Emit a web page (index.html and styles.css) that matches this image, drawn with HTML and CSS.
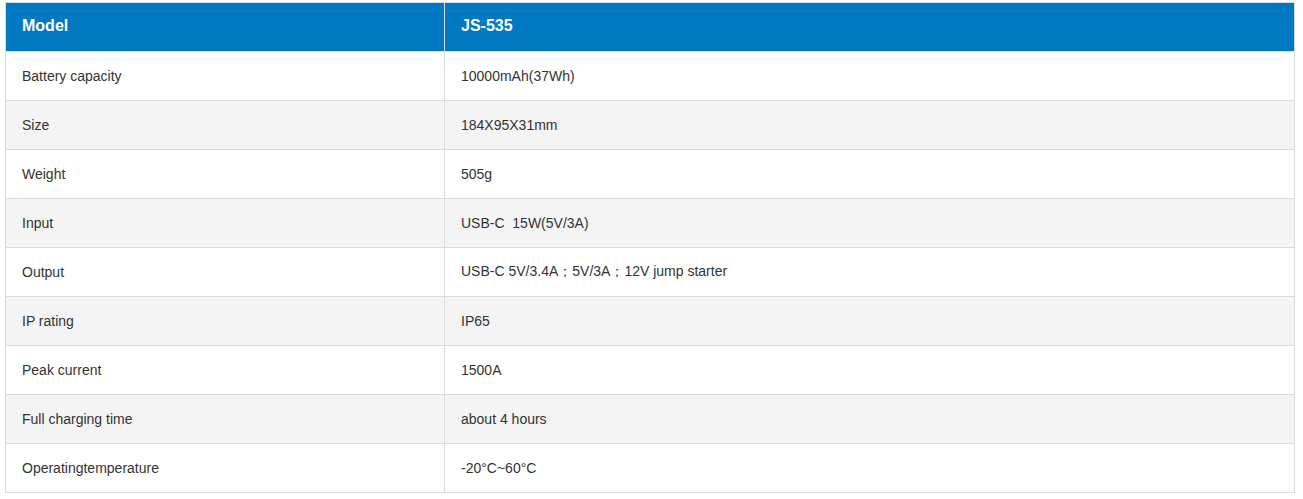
FILE: index.html
```html
<!DOCTYPE html>
<html>
<head>
<meta charset="utf-8">
<link rel="stylesheet" href="styles.css">
</head>
<body>
<table class="spec">
  <colgroup><col class="c1"><col class="c2"></colgroup>
  <thead>
    <tr><th>Model</th><th>JS-535</th></tr>
  </thead>
  <tbody>
    <tr><td>Battery capacity</td><td>10000mAh(37Wh)</td></tr>
    <tr><td>Size</td><td>184X95X31mm</td></tr>
    <tr><td>Weight</td><td>505g</td></tr>
    <tr><td>Input</td><td>USB-C&nbsp; 15W(5V/3A)</td></tr>
    <tr><td>Output</td><td>USB-C 5V/3.4A；5V/3A；12V jump starter</td></tr>
    <tr><td>IP rating</td><td>IP65</td></tr>
    <tr><td>Peak current</td><td>1500A</td></tr>
    <tr><td>Full charging time</td><td>about 4 hours</td></tr>
    <tr><td>Operatingtemperature</td><td>-20°C~60°C</td></tr>
  </tbody>
</table>
</body>
</html>
```
FILE: styles.css
```css
html, body { background: #fff; }
body {
  margin: 2px 0 0 5px;
  font-family: "Liberation Sans", Arial, sans-serif;
}
.spec {
  border-collapse: collapse;
  table-layout: fixed;
  width: 1290px;
}
.spec .c1 { width: 439px; }
.spec th, .spec td {
  border: 1px solid #dcdcdc;
  padding: 0 0 0 16px;
  box-sizing: border-box;
  text-align: left;
  vertical-align: middle;
}
.spec th {
  background: #0079c2;
  color: #fff;
  font-size: 16px;
  font-weight: bold;
  height: 49px;
  padding-bottom: 2px;
}
.spec td {
  color: #333;
  font-size: 14px;
  height: 49px;
}
.spec tbody tr:nth-child(even) td { background: #f4f4f4; }
```
